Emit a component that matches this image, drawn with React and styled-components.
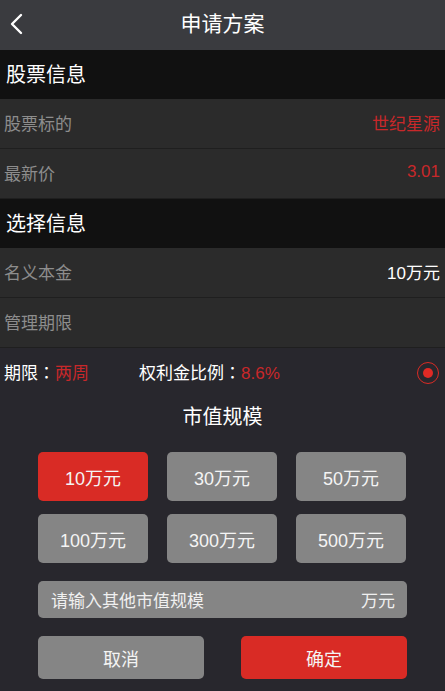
import styled, { createGlobalStyle } from "styled-components";

const red = "#c8282a";
const btnRed = "#d92b25";
const btnGray = "#858585";

const GlobalStyle = createGlobalStyle`
	body {
		margin: 0;
		background: #28272d;
		font-family: "Liberation Sans", "Noto Sans CJK SC", sans-serif;
	}
`;

const sizes = ["10万元", "30万元", "50万元", "100万元", "300万元", "500万元"];

export default function App() {
	return (
		<>
			<GlobalStyle />
			<Page>
				<Header>
					<BackIcon viewBox="0 0 14 22" fill="none">
						<path d="M12 2 L3 11 L12 20" stroke="#fff" strokeWidth="2.4" strokeLinecap="round" strokeLinejoin="round" />
					</BackIcon>
					<HeaderTitle>申请方案</HeaderTitle>
				</Header>

				<Section>股票信息</Section>
				<Row>
					<Label>股票标的</Label>
					<Value $red>世纪星源</Value>
				</Row>
				<Row>
					<Label>最新价</Label>
					<Value $red>3.01</Value>
				</Row>

				<Section>选择信息</Section>
				<Row>
					<Label>名义本金</Label>
					<Value>10万元</Value>
				</Row>
				<Row>
					<Label>管理期限</Label>
				</Row>

				<PlanRow>
					<PlanText>
						期限<Colon>：</Colon>
						<Red>两周</Red>
					</PlanText>
					<PlanText $wide>
						权利金比例<Colon>：</Colon>
						<Red>8.6%</Red>
					</PlanText>
					<Radio>
						<span />
					</Radio>
				</PlanRow>

				<SubTitle>市值规模</SubTitle>

				<Chips>
					{sizes.map((s, i) => (
						<Chip key={s} $active={i === 0}>
							{s}
						</Chip>
					))}
				</Chips>

				<InputBox>
					<span>请输入其他市值规模</span>
					<span>万元</span>
				</InputBox>

				<Actions>
					<ActionButton>取消</ActionButton>
					<ActionButton $primary>确定</ActionButton>
				</Actions>
			</Page>
		</>
	);
}

const Page = styled.div`
	width: 445px;
	min-height: 691px;
	background: #28272d;
	padding-bottom: 12px;
`;

const Header = styled.div`
	position: relative;
	display: flex;
	justify-content: center;
	align-items: center;
	height: 50px;
	background: #3a3b3f;
`;

const BackIcon = styled.svg`
	position: absolute;
	left: 9px;
	top: 13px;
	width: 14px;
	height: 22px;
`;

const HeaderTitle = styled.h1`
	margin: 0 0 6px;
	font-size: 21px;
	font-weight: 400;
	color: #fff;
`;

const Section = styled.div`
	display: flex;
	align-items: center;
	height: 49px;
	padding: 0 0 2px 6px;
	box-sizing: border-box;
	background: #111111;
	color: #fff;
	font-size: 20px;
`;

const Row = styled.div`
	display: flex;
	justify-content: space-between;
	align-items: center;
	height: 46px;
	padding: 0 5px 3px 4px;
	background: #2b2b2b;
	border-bottom: 1px solid #1f1f1f;
	font-size: 17px;
`;

const Label = styled.span`
	color: #8d8d8d;
`;

const Value = styled.span`
	color: ${(p) => (p.$red ? red : "#fff")};
`;

const Red = styled.span`
	color: ${red};
`;

const PlanRow = styled.div`
	display: flex;
	align-items: center;
	height: 47px;
	padding: 0 5px 3px 4px;
	font-size: 17px;
`;

const PlanText = styled.span`
	color: #fff;
	width: ${(p) => (p.$wide ? "auto" : "135px")};
	flex: ${(p) => (p.$wide ? "1" : "none")};
`;

const Colon = styled.span`
	display: inline-block;
	width: 1em;
	text-align: center;
	font-family: "Noto Sans CJK TC", sans-serif;
`;

const Radio = styled.span`
	display: flex;
	justify-content: center;
	align-items: center;
	width: 20px;
	height: 20px;
	margin: 2px 1px 0 0;
	border: 1px solid #d92b25;
	border-radius: 50%;

	span {
		width: 10px;
		height: 10px;
		border-radius: 50%;
		background: #e02a25;
	}
`;

const SubTitle = styled.div`
	text-align: center;
	color: #fff;
	font-size: 20px;
	margin: 3px 0 22px;
`;

const Chips = styled.div`
	display: grid;
	grid-template-columns: repeat(3, 110px);
	column-gap: 19px;
	row-gap: 13px;
	padding: 0 38px;
`;

const Chip = styled.div`
	display: flex;
	justify-content: center;
	align-items: center;
	height: 49px;
	border-radius: 5px;
	background: ${(p) => (p.$active ? btnRed : btnGray)};
	color: #f4f4f4;
	font-size: 18px;
`;

const InputBox = styled.div`
	display: flex;
	justify-content: space-between;
	align-items: center;
	height: 37px;
	margin: 18px 38px 0;
	padding: 0 12px 0 13px;
	border-radius: 5px;
	background: ${btnGray};
	color: #f0f0f0;
	font-size: 17px;
`;

const Actions = styled.div`
	display: flex;
	justify-content: space-between;
	margin: 18px 38px 0;
`;

const ActionButton = styled.div`
	display: flex;
	justify-content: center;
	align-items: center;
	width: 166px;
	height: 43px;
	border-radius: 5px;
	background: ${(p) => (p.$primary ? btnRed : btnGray)};
	color: #f4f4f4;
	font-size: 18px;
`;
